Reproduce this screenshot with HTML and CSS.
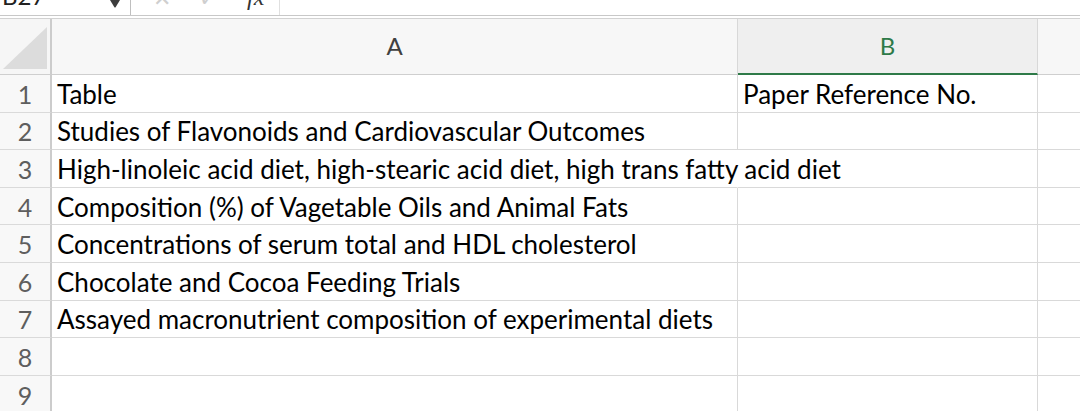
FILE: index.html
```html
<!DOCTYPE html>
<html>
<head>
<meta charset="utf-8">
<link rel="stylesheet" href="styles.css">
</head>
<body>
<div class="formula-bar">
  <div class="namebox">
    <span class="name">B27</span>
    <svg class="dd" width="10" height="8" viewBox="0 0 10 8"><path d="M0 0 H10 L5.6 7.2 Q5 8 4.4 7.2 Z" fill="#3c3c3c"/></svg>
  </div>
  <div class="fx-tools">
    <span class="cancel">✕</span>
    <span class="enter">✓</span>
    <span class="fx">fx</span>
  </div>
  <div class="fx-input"></div>
</div>
<div class="sheet">
  <div class="corner"><svg width="44" height="42" viewBox="0 0 44 42"><polygon points="0,42 44,0 44,42" fill="#dcdcdc"/></svg></div>
  <div class="colhead">A</div>
  <div class="colhead sel">B</div>
  <div class="colhead rest"></div>

  <div class="rowhead">1</div><div class="cell">Table</div><div class="cell">Paper Reference No.</div><div class="cell rest"></div>
  <div class="rowhead">2</div><div class="cell">Studies of Flavonoids and Cardiovascular Outcomes</div><div class="cell"></div><div class="cell rest"></div>
  <div class="rowhead">3</div><div class="cell spill">High-linoleic acid diet, high-stearic acid diet, high trans fatty acid diet</div><div class="cell"></div><div class="cell rest"></div>
  <div class="rowhead">4</div><div class="cell">Composition (%) of Vagetable Oils and Animal Fats</div><div class="cell"></div><div class="cell rest"></div>
  <div class="rowhead">5</div><div class="cell">Concentrations of serum total and HDL cholesterol</div><div class="cell"></div><div class="cell rest"></div>
  <div class="rowhead">6</div><div class="cell">Chocolate and Cocoa Feeding Trials</div><div class="cell"></div><div class="cell rest"></div>
  <div class="rowhead">7</div><div class="cell">Assayed macronutrient composition of experimental diets</div><div class="cell"></div><div class="cell rest"></div>
  <div class="rowhead">8</div><div class="cell"></div><div class="cell"></div><div class="cell rest"></div>
  <div class="rowhead">9</div><div class="cell"></div><div class="cell"></div><div class="cell rest"></div>
</div>
</body>
</html>
```
FILE: styles.css
```css
* { box-sizing: border-box; }
html, body { margin: 0; padding: 0; background: #ffffff; }
body {
  font-family: Lato, "Liberation Sans", sans-serif;
  width: 1080px;
  height: 411px;
  overflow: hidden;
}

.formula-bar {
  height: 16px;
  display: flex;
  align-items: flex-start;
  border-bottom: 1px solid #c8c8c8;
  overflow: hidden;
  margin-bottom: 2px;
}
.namebox {
  width: 131px;
  height: 15px;
  border-right: 1px solid #bfbfbf;
  display: flex;
  align-items: flex-start;
  justify-content: space-between;
  padding-right: 10px;
}
.name {
  font-size: 24px;
  line-height: 24px;
  margin-top: -16px;
  color: #222;
  padding-left: 2px;
}
.fx-tools {
  display: flex;
  align-items: flex-start;
  width: 149px;
  height: 15px;
  border-right: 1px solid #e0e0e0;
  padding-left: 22px;
}
.cancel, .enter {
  font-size: 22px;
  line-height: 22px;
  margin-top: -13px;
  color: #cfcfcf;
}
.cancel { width: 46px; }
.enter { width: 48px; }
.fx {
  font-family: "Liberation Serif", serif;
  font-style: italic;
  font-size: 24px;
  line-height: 24px;
  margin-top: -15px;
  color: #333;
}
.fx-input { flex: 1; }

.sheet {
  display: grid;
  grid-template-columns: 52px 686px 300px 1fr;
  grid-template-rows: 56px repeat(9, 37.6px);
  border-top: 1px solid #d2d2d2;
  font-size: 26px;
  color: #000;
}
.corner {
  background: #f6f6f6;
  border-right: 2px solid #cccccc;
  border-bottom: 1px solid #cfcfcf;
  display: flex;
  align-items: flex-end;
  justify-content: flex-end;
  padding: 0 3px 5px 0;
}
.colhead {
  background: #f7f7f7;
  border-right: 1px solid #d8d8d8;
  border-bottom: 1px solid #cfcfcf;
  display: flex;
  align-items: center;
  justify-content: center;
  color: #404040;
  font-size: 24px;
  padding-bottom: 2px;
}
.colhead.sel {
  background: #efefef;
  color: #2e7a48;
  border-bottom: 2px solid #2e7a48;
}
.colhead.rest { border-right: none; }

.rowhead {
  background: #f8f8f8;
  border-right: 2px solid #cccccc;
  border-bottom: 1px solid #dadada;
  display: flex;
  align-items: center;
  justify-content: center;
  color: #5e5e5e;
  font-size: 25px;
  padding-top: 1px;
}
.cell {
  border-right: 1px solid #d9d9d9;
  border-bottom: 1px solid #d9d9d9;
  display: flex;
  align-items: center;
  padding: 1px 0 0 5px;
  white-space: nowrap;
  overflow: visible;
}
.cell.spill { border-right-color: transparent; }
.cell.rest { border-right: none; }
```
